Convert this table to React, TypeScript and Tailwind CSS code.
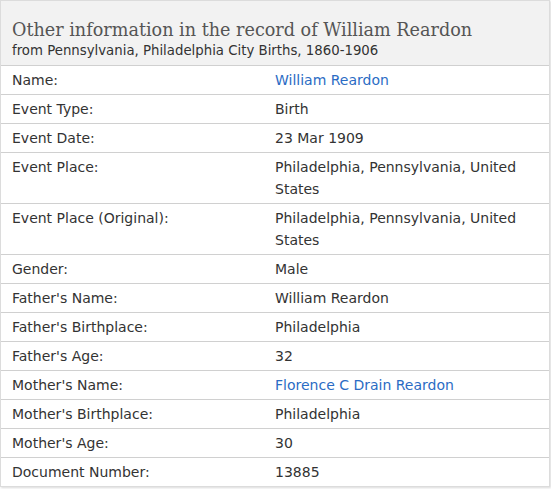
import React from "react";

const rows: { label: string; value: string; link?: boolean }[] = [
  { label: "Name:", value: "William Reardon", link: true },
  { label: "Event Type:", value: "Birth" },
  { label: "Event Date:", value: "23 Mar 1909" },
  { label: "Event Place:", value: "Philadelphia, Pennsylvania, United States" },
  { label: "Event Place (Original):", value: "Philadelphia, Pennsylvania, United States" },
  { label: "Gender:", value: "Male" },
  { label: "Father's Name:", value: "William Reardon" },
  { label: "Father's Birthplace:", value: "Philadelphia" },
  { label: "Father's Age:", value: "32" },
  { label: "Mother's Name:", value: "Florence C Drain Reardon", link: true },
  { label: "Mother's Birthplace:", value: "Philadelphia" },
  { label: "Mother's Age:", value: "30" },
  { label: "Document Number:", value: "13885" },
];

export default function App() {
  return (
    <div className="w-[551px] h-[489px] bg-white">
      <div
        className="w-[550px] border border-[#dcdcdc] shadow-[1px_1px_2px_rgba(0,0,0,0.15)] bg-white"
        style={{ fontFamily: "'DejaVu Sans', Verdana, sans-serif" }}
      >
        <div className="bg-[#f2f2f2] h-[65px] pl-[11px] pt-[17px] border-b border-[#d0d0d0]">
          <div
            className="text-[17.6px] leading-[24px] text-[#555]"
            style={{ fontFamily: "'DejaVu Serif', Georgia, serif" }}
          >
            Other information in the record of William Reardon
          </div>
          <div className="text-[13.3px] leading-[18px] text-[#333]">
            from Pennsylvania, Philadelphia City Births, 1860-1906
          </div>
        </div>
        {rows.map((r, i) => (
          <div
            key={i}
            className={`flex text-[14px] leading-[22px] text-[#333] py-[3px] ${
              i < rows.length - 1 ? "border-b border-[#d0d0d0]" : ""
            }`}
          >
            <div className="w-[274px] pl-[11px] shrink-0">{r.label}</div>
            <div className={`w-[250px] ${r.link ? "text-[#2b6cc4]" : ""}`}>{r.value}</div>
          </div>
        ))}
      </div>
    </div>
  );
}
